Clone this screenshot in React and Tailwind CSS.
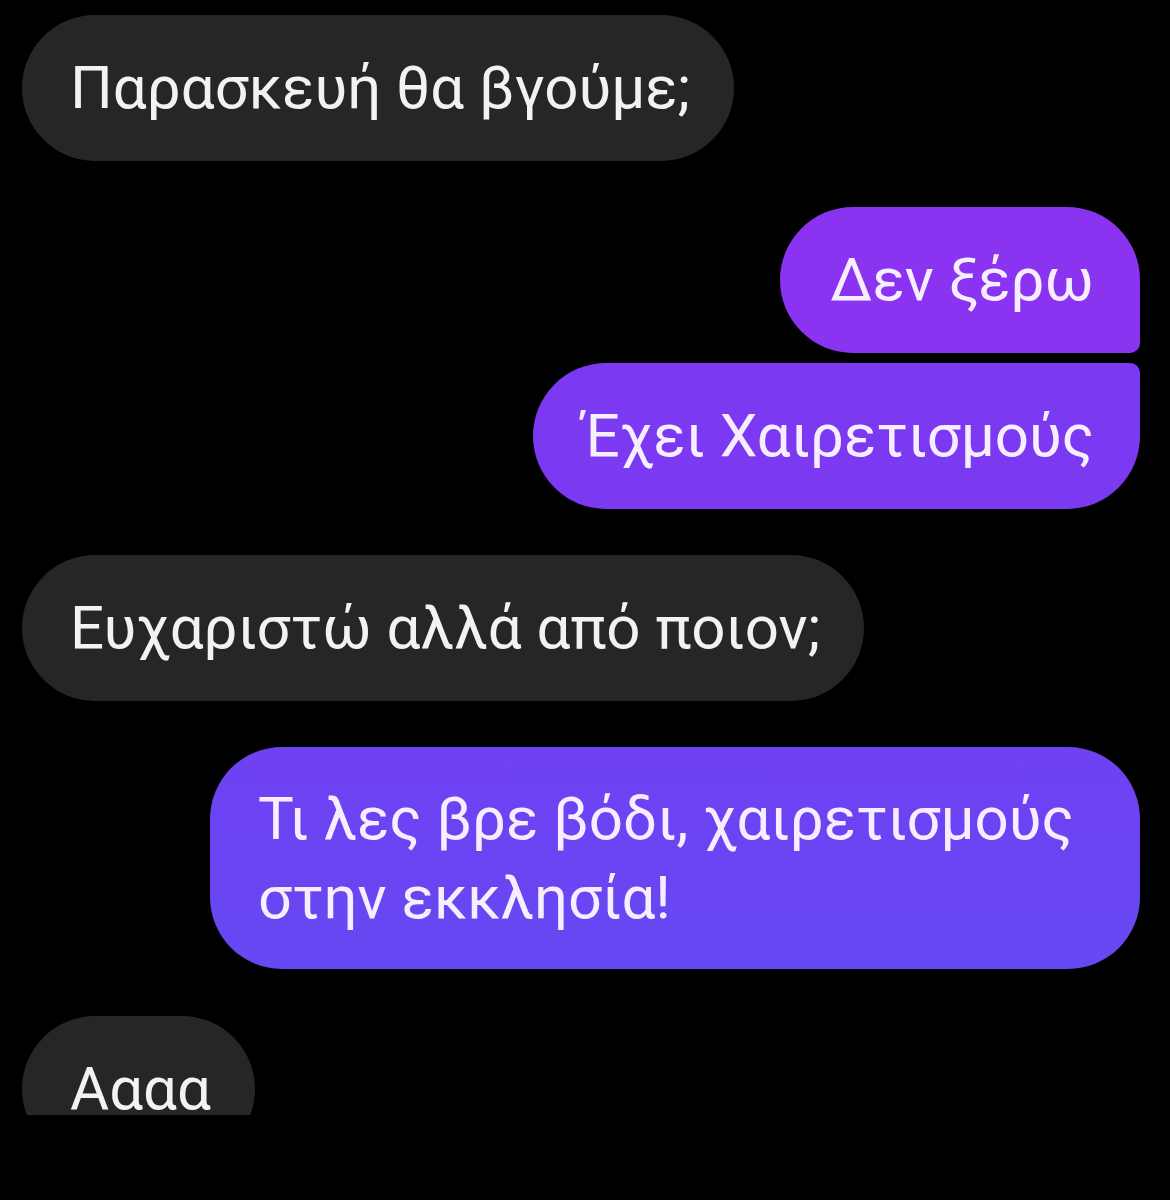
import React from 'react'

const MESSAGES = [
  { id: 1, text: 'Παρασκευή θα βγούμε;', mine: false },
  { id: 2, text: 'Δεν ξέρω', mine: true, shape: 'rounded-[74px] rounded-br-[10px]', color: 'bg-[#8a34f1]', gap: 'mt-[46px]' },
  { id: 3, text: 'Έχει Χαιρετισμούς', mine: true, shape: 'rounded-[74px] rounded-tr-[10px]', color: 'bg-[#7b39f2]', gap: 'mt-[10px]' },
  { id: 4, text: 'Ευχαριστώ αλλά από ποιον;', mine: false, gap: 'mt-[46px]' },
]

function Bubble({ text, mine, shape, color, gap = '' }) {
  if (mine) {
    return (
      <div className={`flex justify-end ${gap}`}>
        <div className={`${shape} ${color} text-[#f6eefe] pl-[50px] pr-[46px] py-[33px] leading-[80px] whitespace-nowrap`}>
          {text}
        </div>
      </div>
    )
  }
  return (
    <div className={`flex justify-start ${gap}`}>
      <div className="rounded-full bg-[#262626] text-[#f2f2f2] pl-[48px] pr-[44px] py-[33px] leading-[80px] whitespace-nowrap">
        {text}
      </div>
    </div>
  )
}

export default function App() {
  return (
    <div className="w-[1170px] h-[1200px] bg-black" style={{ fontFamily: 'Roboto, "Noto Sans", sans-serif' }}>
      <div className="h-[1115px] overflow-hidden pt-[15px] pl-[22px] pr-[30px] text-[60px]">
        {MESSAGES.map(m => (
          <Bubble key={m.id} {...m} />
        ))}

        {/* two-line sent message */}
        <div className="flex justify-end mt-[46px]">
          <div className="w-[930px] rounded-[72px] bg-gradient-to-b from-[#6f41f3] to-[#6648f2] text-[#f6eefe] pl-[48px] pr-[30px] py-[32px] leading-[79px]">
            Τι λες βρε βόδι, χαιρετισμούς στην εκκλησία!
          </div>
        </div>

        {/* last message, cut by the bottom of the screen */}
        <div className="flex justify-start mt-[47px]">
          <div className="rounded-full bg-[#262626] text-[#f2f2f2] pl-[48px] pr-[44px] py-[33px] leading-[80px]">
            Αααα
          </div>
        </div>
      </div>
    </div>
  )
}
